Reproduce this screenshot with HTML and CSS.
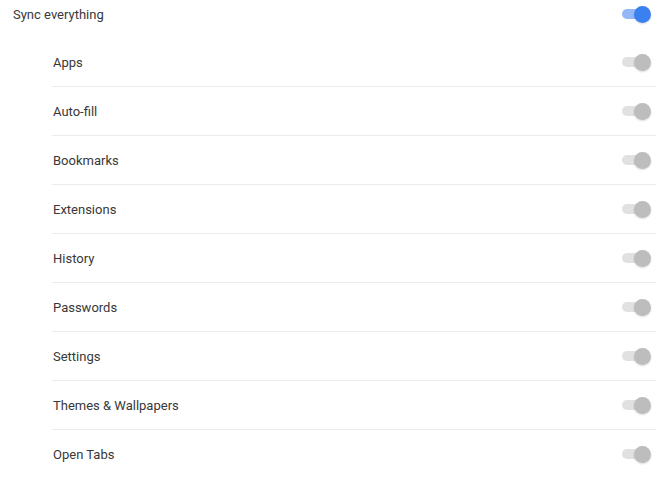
FILE: index.html
```html
<!DOCTYPE html>
<html>
<head>
<meta charset="utf-8">
<link rel="stylesheet" href="styles.css">
</head>
<body>
<div class="page">
  <div class="master">
    <span class="label">Sync everything</span>
    <span class="toggle on"><span class="track"></span><span class="knob"></span></span>
  </div>
  <ul class="list">
    <li class="row"><span class="label">Apps</span><span class="toggle"><span class="track"></span><span class="knob"></span></span></li>
    <li class="row"><span class="label">Auto-fill</span><span class="toggle"><span class="track"></span><span class="knob"></span></span></li>
    <li class="row"><span class="label">Bookmarks</span><span class="toggle"><span class="track"></span><span class="knob"></span></span></li>
    <li class="row"><span class="label">Extensions</span><span class="toggle"><span class="track"></span><span class="knob"></span></span></li>
    <li class="row"><span class="label">History</span><span class="toggle"><span class="track"></span><span class="knob"></span></span></li>
    <li class="row"><span class="label">Passwords</span><span class="toggle"><span class="track"></span><span class="knob"></span></span></li>
    <li class="row"><span class="label">Settings</span><span class="toggle"><span class="track"></span><span class="knob"></span></span></li>
    <li class="row"><span class="label">Themes &amp; Wallpapers</span><span class="toggle"><span class="track"></span><span class="knob"></span></span></li>
    <li class="row"><span class="label">Open Tabs</span><span class="toggle"><span class="track"></span><span class="knob"></span></span></li>
  </ul>
</div>
</body>
</html>
```
FILE: styles.css
```css
html, body {
  margin: 0;
  padding: 0;
  background: #fff;
}
body {
  font-family: Roboto, "Liberation Sans", sans-serif;
  font-size: 13px;
  color: #383838;
}
.page {
  width: 666px;
  padding-right: 10px;
  box-sizing: border-box;
}
.master {
  height: 28px;
  display: flex;
  align-items: center;
  justify-content: space-between;
  padding-left: 13px;
  padding-right: 5px;
}
.list {
  list-style: none;
  margin: 10px 0 0 52px;
  padding: 0;
}
.row {
  height: 48px;
  display: flex;
  align-items: center;
  justify-content: space-between;
  padding-left: 1px;
  padding-right: 5px;
  border-bottom: 1px solid #ebebeb;
}
.row:last-child {
  border-bottom: none;
}
.toggle {
  position: relative;
  width: 29px;
  height: 17px;
  display: block;
}
.track {
  position: absolute;
  left: 0;
  top: 3px;
  width: 26px;
  height: 10px;
  border-radius: 5px;
  background: #e1e1e1;
}
.knob {
  position: absolute;
  right: 0;
  top: 0;
  width: 17px;
  height: 17px;
  border-radius: 50%;
  background: #bdbdbd;
  box-shadow: 0 1px 2px rgba(0,0,0,0.15);
}
.toggle.on .track {
  background: #94b8f7;
}
.toggle.on .knob {
  background: #3b80f0;
}
```
